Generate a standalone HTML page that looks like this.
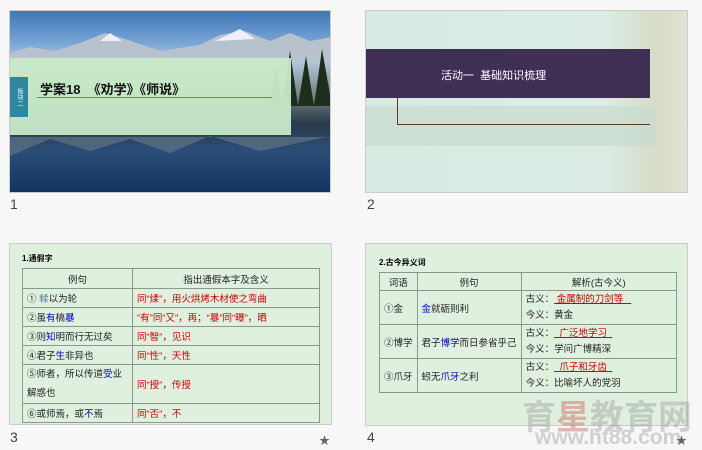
<!DOCTYPE html>
<html><head><meta charset="utf-8"><style>
*{margin:0;padding:0;box-sizing:border-box}
body{width:702px;height:450px;background:#f7f7f7;position:relative;overflow:hidden;font-family:"Liberation Sans","Noto Sans CJK SC",sans-serif}
.a{position:absolute}
.lbl{position:absolute;font-size:14px;color:#444}
table{border-collapse:collapse;position:absolute;font-size:9.5px;color:#222}
td{border:1px solid #8a9a8a;padding:0 4px;white-space:nowrap;overflow:hidden}
.r{color:#c00}.b{color:#00c}
.star{position:absolute;color:#666;font-size:11px}
</style></head><body>
<!-- slide 1 -->
<div class="a" style="left:9px;top:10px;width:322px;height:183px;border:1px solid #ccc;overflow:hidden;background:linear-gradient(#3f76b8 0%,#7aa6d6 18%,#b4c8dc 28%,#7a8a8a 45%,#2a3a4a 62%,#2a4e78 78%,#12355e 100%)">
 <svg class="a" style="left:0;top:0" width="322" height="183"><polygon points="0,42 20,36 45,40 70,32 95,22 115,28 150,40 190,34 210,24 235,20 260,30 280,22 300,30 322,26 322,50 0,50" fill="#b8c2cc"/><polygon points="90,30 100,22 112,30" fill="#eef"/><polygon points="205,30 230,18 245,28" fill="#eef"/>
 <polygon points="260,95 266,55 272,95 280,40 288,95 296,45 304,95 312,38 322,95" fill="#1e2e1c"/>
 <polygon points="0,145 40,128 80,140 120,128 160,142 200,125 250,140 322,125 322,126 0,126" fill="#6a7a8a" opacity=".6"/></svg>
 <div class="a" style="left:0;top:47px;width:281px;height:77px;background:rgba(200,235,200,.95)"></div>
 <div class="a" style="left:0;top:66px;width:18px;height:40px;background:#2e86a0;color:#dff;font-size:6px;writing-mode:vertical-rl;text-align:center;line-height:18px">板块二</div>
 <div class="a" style="left:30px;top:68px;font-size:13px;font-weight:bold;color:#111">学案18 &nbsp;《劝学》《师说》</div>
 <div class="a" style="left:27px;top:86px;width:235px;height:1px;background:#5a9a5a"></div>
</div>
<div class="lbl" style="left:10px;top:196px">1</div>
<!-- slide 2 -->
<div class="a" style="left:365px;top:10px;width:323px;height:183px;border:1px solid #ccc;overflow:hidden;background:linear-gradient(90deg,#d6ebe2 0%,#dcece4 75%,#d6dcc8 90%,#e0e4d4 100%)">
 <div class="a" style="left:0;top:95px;width:290px;height:40px;background:#c8dcd0;opacity:.7"></div>
 <div class="a" style="left:0;top:38px;width:284px;height:49px;background:#3f2f55"></div>
 <div class="a" style="left:75px;top:56px;font-size:11px;color:#fff">活动一 &nbsp;基础知识梳理</div>
 <div class="a" style="left:31px;top:87px;width:1px;height:27px;background:#5a3a20"></div>
 <div class="a" style="left:31px;top:113px;width:253px;height:1px;background:#5a3a20"></div>
</div>
<div class="lbl" style="left:367px;top:196px">2</div>
<!-- slide 3 -->
<div class="a" style="left:9px;top:243px;width:323px;height:182px;border:1px solid #ccc;background:#dff0df"></div>
<div class="a" style="left:22px;top:253px;font-size:8px;font-weight:bold">1.通假字</div>
<table style="left:22px;top:268px;width:298px">
<tr style="height:20px"><td style="width:110px;text-align:center">例句</td><td style="text-align:center">指出通假本字及含义</td></tr>
<tr style="height:19px"><td>① <span style="color:#68a">輮</span>以为轮</td><td class="r">同“煣”，用火烘烤木材使之弯曲</td></tr>
<tr style="height:19px"><td>②虽<span class="b">有</span>槁<span class="b">暴</span></td><td class="r">“有”同“又”，再；“暴”同“曝”，晒</td></tr>
<tr style="height:19px"><td>③则<span class="b">知</span>明而行无过矣</td><td class="r">同“智”，见识</td></tr>
<tr style="height:19px"><td>④君子<span class="b">生</span>非异也</td><td class="r">同“性”，天性</td></tr>
<tr style="height:34px"><td style="white-space:normal;line-height:19px">⑤师者，所以传道<span class="b">受</span>业解惑也</td><td class="r">同“授”，传授</td></tr>
<tr style="height:19px"><td>⑥或师焉，或<span class="b">不</span>焉</td><td class="r">同“否”，不</td></tr>
</table>
<div class="lbl" style="left:10px;top:429px">3</div>
<div class="star" style="left:319px;top:432px">★</div>
<!-- slide 4 -->
<div class="a" style="left:365px;top:243px;width:323px;height:183px;border:1px solid #ccc;background:#dff0df"></div>
<div class="a" style="left:379px;top:257px;font-size:8px;font-weight:bold">2.古今异义词</div>
<table style="left:379px;top:272px;width:298px">
<tr style="height:18px"><td style="width:35px;text-align:center">词语</td><td style="width:101px;text-align:center">例句</td><td style="text-align:center">解析(古今义)</td></tr>
<tr style="height:34px"><td>①金</td><td><span class="b">金</span>就砺则利</td><td style="line-height:16px">古义：<span class="r" style="text-decoration:underline">&nbsp;金属制的刀剑等&nbsp;&nbsp;&nbsp;</span><br>今义：黄金</td></tr>
<tr style="height:34px"><td>②博学</td><td>君子<span class="b">博学</span>而日参省乎己</td><td style="line-height:16px">古义：<span class="r" style="text-decoration:underline">&nbsp;&nbsp;广泛地学习&nbsp;&nbsp;</span><br>今义：学问广博精深</td></tr>
<tr style="height:34px"><td>③爪牙</td><td>蚓无<span class="b">爪牙</span>之利</td><td style="line-height:16px">古义：<span class="r" style="text-decoration:underline">&nbsp;&nbsp;爪子和牙齿&nbsp;&nbsp;</span><br>今义：比喻坏人的党羽</td></tr>
</table>
<div class="a" style="left:522px;top:390px;font-size:34px;font-weight:bold;color:rgba(150,150,150,.4);letter-spacing:0">育<span style="color:rgba(200,80,80,.4)">星</span>教育网</div>
<div class="a" style="left:535px;top:426px;font-size:21px;font-weight:bold;color:rgba(150,150,150,.4)">www.ht88.com</div>
<div class="lbl" style="left:367px;top:429px">4</div>
<div class="star" style="left:676px;top:432px">★</div>
</body></html>
